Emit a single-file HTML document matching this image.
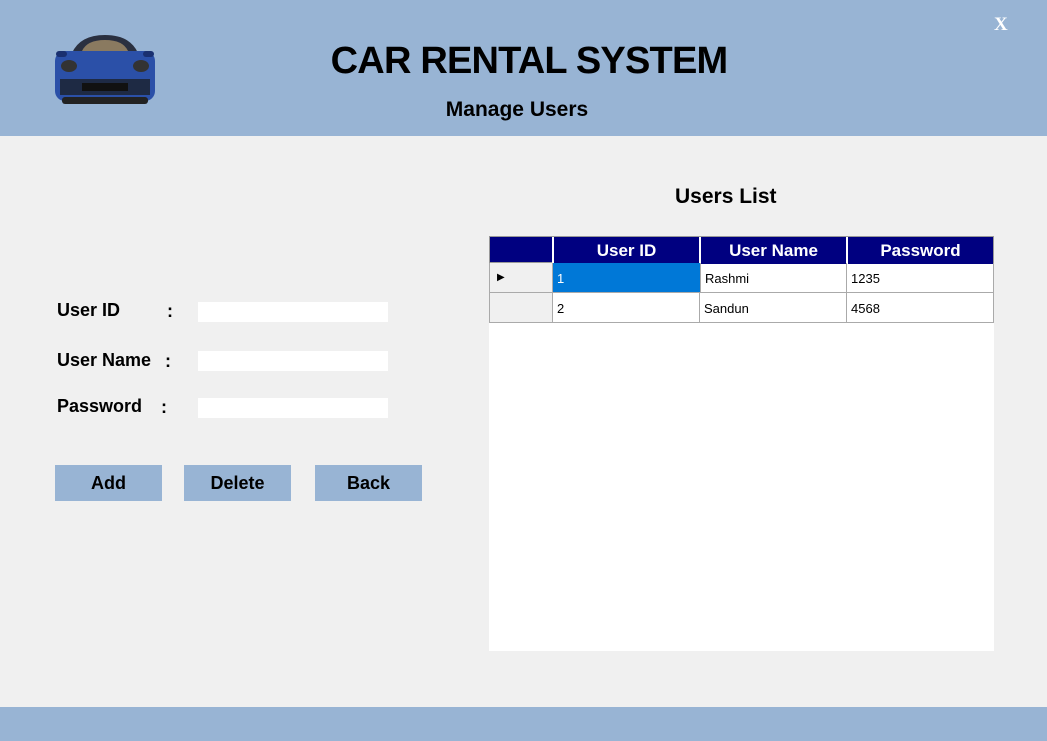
<!DOCTYPE html>
<html><head><style>
body{margin:0;width:1047px;height:741px;background:#f0f0f0;position:relative;overflow:hidden;font-family:"Liberation Sans",Arial,sans-serif}
.a{position:absolute}
.hdr{left:0;top:0;width:1047px;height:136px;background:#98b4d4}
.ftr{left:0;top:707px;width:1047px;height:34px;background:#98b4d4}
.b{font-weight:bold;color:#000}
.lbl{font-size:18px;font-weight:bold}
.in{background:#fff;width:190px;height:20px;left:198px}
.btn{background:#98b4d4;width:107px;height:36px;top:465px;font-size:18px;font-weight:bold;text-align:center;line-height:36px}
.grid{left:489px;top:236px;width:505px;height:415px;background:#fff}
.c{position:absolute;box-sizing:border-box;font-size:13px;line-height:31px;padding-left:4px}
.h{background:#000080;color:#fff;font-weight:bold;font-size:17px;line-height:27px;text-align:center;padding:0}
</style></head><body>
<div class="a hdr"></div>
<svg class="a" style="left:52px;top:33px" width="106" height="75" viewBox="0 0 106 75">
<path d="M20 20 Q28 2 53 2 Q78 2 86 20 Z" fill="#2a3040"/>
<path d="M30 18 Q35 7 53 7 Q71 7 76 18 Z" fill="#8a7a60"/>
<rect x="3" y="18" width="100" height="50" rx="10" fill="#2b50a8"/>
<rect x="4" y="18" width="11" height="6" rx="3" fill="#1a3070"/><rect x="91" y="18" width="11" height="6" rx="3" fill="#1a3070"/>
<ellipse cx="17" cy="33" rx="8" ry="6" fill="#333"/><ellipse cx="89" cy="33" rx="8" ry="6" fill="#333"/>
<rect x="8" y="46" width="90" height="16" fill="#1e2a44"/>
<rect x="30" y="50" width="46" height="8" fill="#111"/>
<rect x="10" y="64" width="86" height="7" rx="3" fill="#222"/>
</svg>
<div class="a b" style="left:0;width:1058px;text-align:center;top:40px;font-size:38px;letter-spacing:-0.8px">CAR RENTAL SYSTEM</div>
<div class="a b" style="left:0;width:1034px;text-align:center;top:98px;font-size:21px">Manage Users</div>
<div class="a b" style="left:994px;top:14px;font-size:19px;color:#fff;font-family:'Liberation Serif',serif">X</div>
<div class="a lbl" style="left:57px;top:300px">User ID</div><div class="a lbl" style="left:167px;top:301px">:</div>
<div class="a lbl" style="left:57px;top:350px">User Name</div><div class="a lbl" style="left:165px;top:351px">:</div>
<div class="a lbl" style="left:57px;top:396px">Password</div><div class="a lbl" style="left:161px;top:397px">:</div>
<div class="a in" style="top:302px"></div><div class="a in" style="top:351px"></div><div class="a in" style="top:398px"></div>
<div class="a btn" style="left:55px">Add</div><div class="a btn" style="left:184px">Delete</div><div class="a btn" style="left:315px">Back</div>
<div class="a b" style="left:675px;top:185px;font-size:21px">Users List</div>
<div class="a grid">
<div class="c h" style="left:0;top:0;width:505px;height:27px;border:1px solid #999"></div>
<div class="c h" style="left:63px;top:1px;width:147px;border-left:2px solid #fff">User ID</div>
<div class="c h" style="left:210px;top:1px;width:147px;border-left:2px solid #fff">User Name</div>
<div class="c h" style="left:357px;top:1px;width:147px;border-left:2px solid #fff">Password</div>
<div class="c" style="left:0;top:27px;width:505px;height:60px;border:1px solid #aaa;border-top:0"></div>
<div class="c" style="left:1px;top:27px;width:63px;height:30px;background:#f0f0f0;border-right:1px solid #aaa;border-bottom:1px solid #aaa;font-size:10px;padding-left:7px;line-height:30px">&#9654;</div>
<div class="c" style="left:1px;top:57px;width:63px;height:29px;background:#f0f0f0;border-right:1px solid #aaa"></div>
<div class="c" style="left:64px;top:27px;width:147px;height:30px;background:#0078d7;color:#fff;border-bottom:1px solid #aaa">1</div>
<div class="c" style="left:211px;top:27px;width:147px;height:30px;border-left:1px solid #aaa;border-bottom:1px solid #aaa">Rashmi</div>
<div class="c" style="left:357px;top:27px;width:147px;height:30px;border-left:1px solid #aaa;border-bottom:1px solid #aaa">1235</div>
<div class="c" style="left:64px;top:57px;width:147px;height:29px">2</div>
<div class="c" style="left:210px;top:57px;width:147px;height:29px;border-left:1px solid #aaa">Sandun</div>
<div class="c" style="left:357px;top:57px;width:147px;height:29px;border-left:1px solid #aaa">4568</div>
</div>
<div class="a ftr"></div>
</body></html>
